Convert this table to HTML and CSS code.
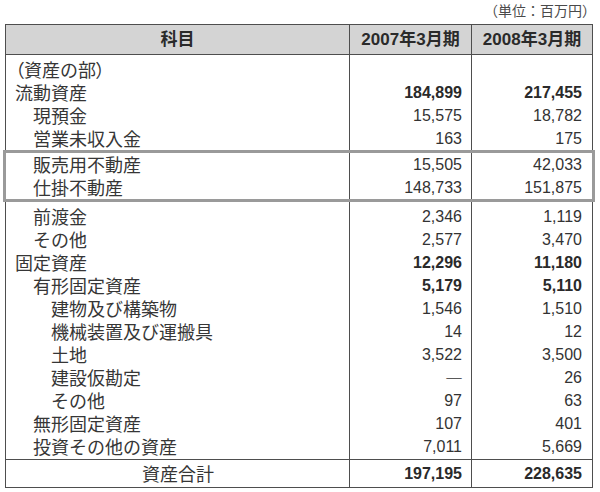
FILE: index.html
```html
<!DOCTYPE html>
<html lang="ja">
<head>
<meta charset="utf-8">
<link rel="stylesheet" href="styles.css">
</head>
<body>
<div class="page">
  <div class="unit">（単位：百万円）</div>
  <div class="sheet">
    <div class="head">
      <div class="hc">科目</div>
      <div class="hc">2007年3月期</div>
      <div class="hc">2008年3月期</div>
    </div>
    <div class="body">
      <div class="row"><div class="lbl"><span class="palt">（</span>資産の部<span class="palt">）</span></div><div class="num"></div><div class="num"></div></div>
      <div class="row"><div class="lbl">流動資産</div><div class="num b">184,899</div><div class="num b">217,455</div></div>
      <div class="row"><div class="lbl l1">現預金</div><div class="num">15,575</div><div class="num">18,782</div></div>
      <div class="row"><div class="lbl l1">営業未収入金</div><div class="num">163</div><div class="num">175</div></div>
      <div class="group">
        <div class="row"><div class="lbl l1">販売用不動産</div><div class="num">15,505</div><div class="num">42,033</div></div>
        <div class="row"><div class="lbl l1">仕掛不動産</div><div class="num">148,733</div><div class="num">151,875</div></div>
      </div>
      <div class="row"><div class="lbl l1">前渡金</div><div class="num">2,346</div><div class="num">1,119</div></div>
      <div class="row"><div class="lbl l1">その他</div><div class="num">2,577</div><div class="num">3,470</div></div>
      <div class="row"><div class="lbl">固定資産</div><div class="num b">12,296</div><div class="num b">11,180</div></div>
      <div class="row"><div class="lbl l1">有形固定資産</div><div class="num b">5,179</div><div class="num b">5,110</div></div>
      <div class="row"><div class="lbl l2">建物及び構築物</div><div class="num">1,546</div><div class="num">1,510</div></div>
      <div class="row"><div class="lbl l2">機械装置及び運搬具</div><div class="num">14</div><div class="num">12</div></div>
      <div class="row"><div class="lbl l2">土地</div><div class="num">3,522</div><div class="num">3,500</div></div>
      <div class="row"><div class="lbl l2">建設仮勘定</div><div class="num dash">―</div><div class="num">26</div></div>
      <div class="row"><div class="lbl l2">その他</div><div class="num">97</div><div class="num">63</div></div>
      <div class="row"><div class="lbl l1">無形固定資産</div><div class="num">107</div><div class="num">401</div></div>
      <div class="row"><div class="lbl l1">投資その他の資産</div><div class="num">7,011</div><div class="num">5,669</div></div>
      <div class="row total"><div class="lbl center">資産合計</div><div class="num b">197,195</div><div class="num b">228,635</div></div>
    </div>
  </div>
</div>
</body>
</html>
```

FILE: styles.css
```css
html, body {
  margin: 0;
  padding: 0;
  background: #ffffff;
}

body {
  font-family: "Noto Sans CJK JP", "Noto Sans", sans-serif;
  color: #363636;
}

.page {
  width: 600px;
  height: 492px;
  overflow: hidden;
}

.unit {
  height: 20px;
  line-height: 20px;
  font-size: 14px;
  color: #4a4a4a;
  text-align: right;
  padding-right: 4px;
  margin-bottom: 4px;
}

.sheet {
  margin-left: 5px;
  width: 586px;
  border: 1px solid #4e4e4e;
}

.head {
  display: grid;
  grid-template-columns: 344px 122px 120px;
  height: 29px;
  background: #d4d4d4;
  border-bottom: 1px solid #4e4e4e;
}

.hc {
  line-height: 29px;
  text-align: center;
  font-size: 17px;
  font-weight: 700;
  color: #2a2a2a;
  font-family: "Liberation Sans", "Noto Sans CJK JP", sans-serif;
  border-right: 1px solid #4e4e4e;
}

.hc:last-child {
  border-right: none;
}

.body {
  padding-top: 3px;
  background:
    linear-gradient(#4e4e4e, #4e4e4e) no-repeat 343px 0 / 1px 100%,
    linear-gradient(#4e4e4e, #4e4e4e) no-repeat 465px 0 / 1px 100%;
}

.row {
  display: grid;
  grid-template-columns: 344px 122px 120px;
  height: 23px;
  line-height: 23px;
}

.lbl {
  font-size: 18px;
  padding-left: 9px;
  white-space: nowrap;
}

.lbl.l1 {
  padding-left: 27px;
}

.lbl.l2 {
  padding-left: 45px;
}

.lbl.center {
  padding-left: 0;
  text-align: center;
}

.palt {
  font-feature-settings: "palt";
}

.num {
  font-family: "Liberation Sans", "Noto Sans CJK JP", sans-serif;
  font-size: 16px;
  text-align: right;
  padding-right: 10px;
  color: #333333;
}

.num.b {
  font-weight: 700;
  color: #2a2a2a;
}

.num.dash {
  font-family: "Noto Sans CJK JP", sans-serif;
  font-size: 18px;
  padding-right: 9px;
}

.group {
  margin: 0 -3px 3px;
  border: 3px solid #9a9a9a;
}

.total {
  margin-top: 1px;
  height: 27px;
  line-height: 27px;
  border-top: 1px solid #4e4e4e;
}
```
